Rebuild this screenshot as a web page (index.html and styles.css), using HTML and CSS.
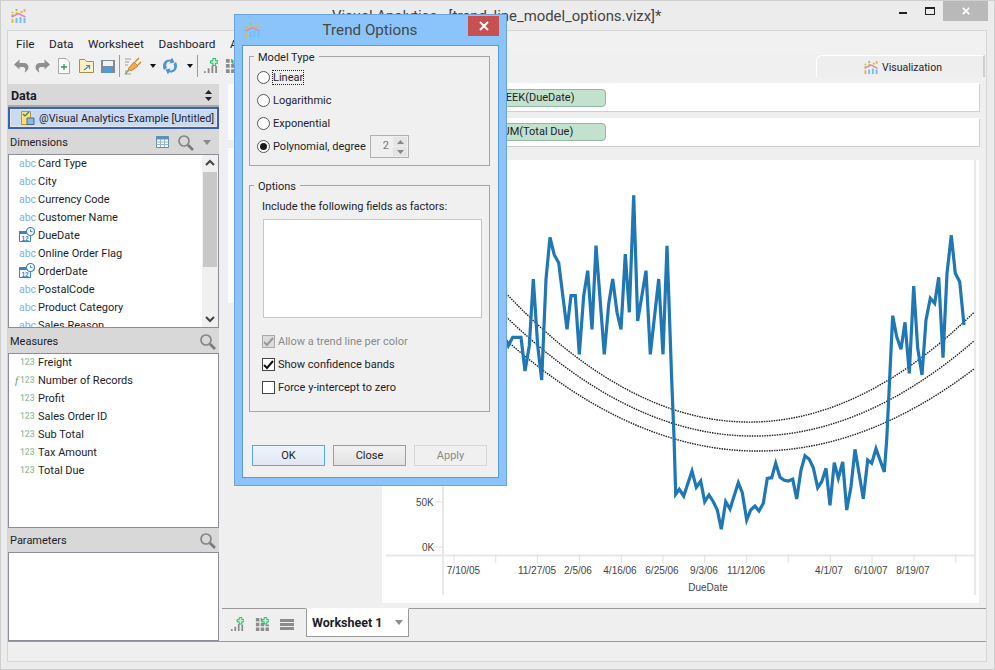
FILE: index.html
```html
<!DOCTYPE html>
<html lang="en">
<head>
<meta charset="utf-8">
<title>Visual Analytics</title>
<link rel="stylesheet" href="styles.css">
</head>
<body>
<svg class="defs" width="0" height="0" aria-hidden="true">
  <defs>
    <symbol id="i-app" viewBox="0 0 16 16">
      <path d="M1 6h2v2H1zM5 4h2v2H5zM13 1h2v3h-2zM10 3h2v2h-2z" fill="#f5b335"/>
      <path d="M5 1h2v2H5zM1 4h2v1H1z" fill="#8fc46f"/>
      <path d="M1 9 8 5.500l7 3.500" fill="none" stroke="#d58bb8" stroke-width="1.500"/>
      <path d="M1 11h2v4H1z" fill="#f5b335"/>
      <path d="M5 10h2v5H5zM9 9h2v6H9zM13 10h2v5h-2z" fill="#6fc0f2"/>
    </symbol>
    <symbol id="i-search" viewBox="0 0 17 17">
      <circle cx="7" cy="7" r="5" fill="none" stroke="#858585" stroke-width="1.700"/>
      <path d="m11 11 5 5" stroke="#7a7a7a" stroke-width="2.600"/>
    </symbol>
    <symbol id="i-date" viewBox="0 0 16 16">
      <path d="M.5 4.500h11v10H.5z" fill="#fff" stroke="#3f7fc8"/>
      <path d="M.5 4h11v3H.5z" fill="#3f7fc8"/>
      <text x="2.500" y="13.500" class="svg-date">12</text>
      <circle cx="11.500" cy="4.500" r="4" fill="#fff" stroke="#3f7fc8" stroke-width="1.200"/>
      <path d="M11.500 2.500v2.200h2" fill="none" stroke="#3f7fc8"/>
    </symbol>
    <symbol id="i-bars-plus" viewBox="0 0 16 16">
      <path d="M1 14h2v2H1zM5 11h2v5H5zM9 8h2v8H9zM13 8.500h2V16h-2z" fill="#8c8c8c"/>
      <path d="M10.500.5h3V3H16v2.500h-2.500V8h-3V5.500H8V3h2.500z" fill="#c4f5d4" stroke="#10b858"/>
    </symbol>
    <symbol id="i-grid-plus" viewBox="0 0 16 16">
      <path d="M1 1h4v4H1zM1 6.500h4v4H1zM1 12h4v4H1zM6.500 1h1.500v4H6.500zM6.500 6.500h4v4h-4zM6.500 12h4v4h-4zM12 12h4v4h-4zM12 8.500h4v2h-4z" fill="#8c8c8c"/>
      <path d="M10.500.5h3V3H16v2.500h-2.500V8h-3V5.500H8V3h2.500z" fill="#c4f5d4" stroke="#10b858"/>
    </symbol>
  </defs>
</svg>

<div class="app">
  <header class="titlebar">
    <svg class="app-icon"><use href="#i-app"/></svg>
    <span class="app-title">Visual Analytics - [trend_line_model_options.vizx]*</span>
    <div class="win-controls">
      <span class="win-min"></span>
      <span class="win-max"></span>
      <span class="win-close">
        <svg viewBox="0 0 11 11"><path d="m2 2 7 7M9 2 2 9" stroke="#fff" stroke-width="2"/></svg>
      </span>
    </div>
  </header>

  <div class="client">
    <nav class="menubar">
      <span>File</span><span>Data</span><span>Worksheet</span><span>Dashboard</span><span>Analysis</span>
    </nav>

    <div class="toolstrip">
      <div class="toolbar">
        <svg class="tool t-undo" viewBox="0 0 16 16"><path d="M6.500 1.500 1 6.500l5.500 5V9H10c1.500 0 2.300 1 2.300 2.500 0 1-.4 2-.9 3C14 13.500 15.500 11.500 15.500 9c0-2.500-2.500-4-5-4h-4z" fill="#8f8f8f"/></svg>
        <svg class="tool t-redo" viewBox="0 0 16 16"><path d="m9.500 1.500 5.500 5-5.500 5V9H6c-1.500 0-2.300 1-2.300 2.500 0 1 .4 2 .9 3C2 13.500.5 11.500.5 9c0-2.500 2.500-4 5-4h4z" fill="#8f8f8f"/></svg>
        <svg class="tool t-new" viewBox="0 0 12 16"><path d="M.5.500h7.500l3.500 3.500v11.500H.5z" fill="#fff" stroke="#a8a8a8"/><path d="M6 6v6M3 9h6" stroke="#2a9d4a" stroke-width="1.300"/></svg>
        <svg class="tool t-open" viewBox="0 0 15 14"><path d="M.5 13.500V.5h5l2 2h7v11z" fill="#fdf0c8" stroke="#b08a4a"/><path d="m5 11 5-4M7 6.500h3.500V10" fill="none" stroke="#3f8fd0" stroke-width="1.200"/></svg>
        <svg class="tool t-save" viewBox="0 0 14 14"><path d="M0 1h14v13H0z" fill="#7f8a94"/><path d="M2 2h10v5H2z" fill="#eef2f5"/><path d="M3 9h8v5H3z" fill="#4f9ad8"/></svg>
        <i class="sep s-a"></i>
        <svg class="tool t-plug" viewBox="0 0 18 18"><path d="M1 2h6M1 5h4M1 8h3M1 14h3M1 17h6" stroke="#9a9a9a"/><path d="m4 12 6-7 4 4-7 5z" fill="#f4a94e" stroke="#c98430"/><path d="m11 5 4-4M14 8l3-3" stroke="#c98430" stroke-width="1.400"/><path d="m1 17 4-4" stroke="#6fb05a" stroke-width="1.600"/></svg>
        <i class="caret c-a"></i>
        <svg class="tool t-sync" viewBox="0 0 16 18"><path d="M2 13C-1 7 3 1.500 9 2.500l1-2 2.500 5-5 1 1-2C5 4 3 7.500 5 11z" fill="#4f94cf"/><path d="M14 5c3 6-1 11.500-7 10.500l-1 2-2.500-5 5-1-1 2c4 .5 6-3 4-6.500z" fill="#4f94cf"/></svg>
        <i class="caret c-b"></i>
        <i class="sep s-b"></i>
        <svg class="tool t-bars"><use href="#i-bars-plus"/></svg>
        <svg class="tool t-grid"><use href="#i-grid-plus"/></svg>
      </div>
      <div class="viz-tab">
        <svg class="viz-icon"><use href="#i-app"/></svg>
        <span>Visualization</span>
      </div>
    </div>

    <div class="workspace">
      <aside class="sidebar">
        <div class="pane-head pane-data">
          <b>Data</b>
          <svg width="7" height="11" viewBox="0 0 7 11"><path d="M3.500 0 7 4H0zM3.500 11 0 7h7z" fill="#222"/></svg>
        </div>
        <div class="source">
          <svg class="source-icon" viewBox="0 0 14 14"><path d="M.5.500h9v13h-9z" fill="#fbe26a" stroke="#b89a30"/><path d="m2 3 2 2 4-4" fill="none" stroke="#3a6ea8" stroke-width="1.200"/><path d="M6 7h7v6.500H6z" fill="#8fb6dc" stroke="#3a6ea8"/></svg>
          <span>@Visual Analytics Example [Untitled]</span>
        </div>

        <div class="pane-head">
          <span>Dimensions</span>
          <div class="head-tools">
            <svg width="13" height="12" viewBox="0 0 13 12"><path d="M.5.500h12v11H.5z" fill="#fff" stroke="#5f8fb8"/><path d="M.5.500h12v3H.5z" fill="#5f8fb8"/><path d="M.5 6h12M.5 8.500h12M4.500 3v8M8.500 3v8" stroke="#9ab4cc"/></svg>
            <svg class="head-search"><use href="#i-search"/></svg>
            <i class="grey-caret"></i>
          </div>
        </div>
        <div class="list list-dim">
          <ul class="fields">
            <li><em class="abc">abc</em>Card Type</li>
            <li><em class="abc">abc</em>City</li>
            <li><em class="abc">abc</em>Currency Code</li>
            <li><em class="abc">abc</em>Customer Name</li>
            <li><svg class="date"><use href="#i-date"/></svg>DueDate</li>
            <li><em class="abc">abc</em>Online Order Flag</li>
            <li><svg class="date"><use href="#i-date"/></svg>OrderDate</li>
            <li><em class="abc">abc</em>PostalCode</li>
            <li><em class="abc">abc</em>Product Category</li>
            <li><em class="abc">abc</em>Sales Reason</li>
          </ul>
          <div class="scrollbar">
            <svg width="16" height="17" viewBox="0 0 16 17"><path d="m4 10 4-4 4 4" fill="none" stroke="#444" stroke-width="2"/></svg>
            <div class="track"><div class="thumb"></div></div>
            <svg width="16" height="17" viewBox="0 0 16 17"><path d="m4 7 4 4 4-4" fill="none" stroke="#444" stroke-width="2"/></svg>
          </div>
        </div>

        <div class="pane-head">
          <span>Measures</span>
          <svg class="head-search"><use href="#i-search"/></svg>
        </div>
        <div class="list list-mea">
          <ul class="fields">
            <li><em class="num">123</em>Freight</li>
            <li><em class="num"><u class="fx">f</u>123</em>Number of Records</li>
            <li><em class="num">123</em>Profit</li>
            <li><em class="num">123</em>Sales Order ID</li>
            <li><em class="num">123</em>Sub Total</li>
            <li><em class="num">123</em>Tax Amount</li>
            <li><em class="num">123</em>Total Due</li>
          </ul>
        </div>

        <div class="pane-head pane-par">
          <span>Parameters</span>
          <svg class="head-search"><use href="#i-search"/></svg>
        </div>
        <div class="list list-par"></div>
      </aside>

      <main class="stage">
        <div class="stage-body">
          <div class="marks">
            <div class="mark-card mark-a"></div>
            <div class="mark-card mark-b"></div>
          </div>
          <div class="viz">
            <div class="shelf"><span class="pill">WEEK(DueDate)</span></div>
            <div class="shelf"><span class="pill">SUM(Total Due)</span></div>
            <div class="chart">
              <svg class="plot" width="597" height="443" viewBox="382 160 597 443">
                <path class="axis" d="M443 160v435M386 555.500h589M975 160v435"/>
                <path class="tick" d="M436 502h7M436 547h7M454 555v8M495.700 555v8M537.300 555v8M579.300 555v8M621.300 555v8M663 555v8M704.700 555v8M746.700 555v8M788.300 555v8M830.300 555v8M872 555v8M914 555v8M955.700 555v8"/>
                <g class="ylab">
                  <text x="433.700" y="505.500">50K</text>
                  <text x="434.300" y="550.500">0K</text>
                </g>
                <g class="xlab">
                  <text x="463.500" y="574">7/10/05</text>
                  <text x="537" y="574">11/27/05</text>
                  <text x="578" y="574">2/5/06</text>
                  <text x="620" y="574">4/16/06</text>
                  <text x="662" y="574">6/25/06</text>
                  <text x="704" y="574">9/3/06</text>
                  <text x="746" y="574">11/12/06</text>
                  <text x="829" y="574">4/1/07</text>
                  <text x="871" y="574">6/10/07</text>
                  <text x="913" y="574">8/19/07</text>
                  <text x="708" y="590.500">DueDate</text>
                </g>
                <g class="band">
                  <path d="M506 293.300Q740 541 974 312.300"/>
                  <path d="M506 316.700Q740 542.600 974 341"/>
                  <path d="M506 340Q740 546.500 974 369"/>
                </g>
                <path class="series" d="M506 340 508.300 345.700 512.700 337.300H521L525 371 529.300 345.700 533.300 279 537.700 345.700 541.700 380 546 279 550 237.300 554.300 255 558.700 262.700 567 329.300 571 295.700H575.300L579.300 354.300 583.700 295.700 587.700 270.700 592 329.300 596 245.700 604.300 354.300 608.700 304 612.700 279 617 312.300 621 329.300 625.300 254 629.300 312.300 633.700 195.300 637.700 321 646 270.700 650.300 354.300 658.700 279 663 354.300 667 245.700 671.700 380 674 436.700 675.700 494.300 679.300 489.300 683.700 496 692 471 696.300 487.300 700.700 481 704.700 501.700 709 495 713.300 501.700 717.300 510 721.300 529.300 725.700 501.700 730 509 738.300 482.700 742.300 492.700 746.700 520 750.700 510 755 506 759 511 763.300 503.300 767.300 478.300 771.700 477.700 775.700 463.300 780 477.300 784.300 480.300 788.300 481 792.700 479.300 796.700 499 801 470 805 455.700 809.300 459.300 813.300 467.700 817.700 487.700 821.700 481.700 826 468.300 830 505.300 834.300 462.700 838.300 478.300 842.700 462 846.700 510 851 486.700 855 449.300 863.300 498.700 867.700 460 871.700 463.300 876 448.700 884.300 472 886.700 440 892.700 315.700 896.700 336.700 901 349.300 905 322.300 909.300 373.300 913.700 286 917.700 348.300 922 375 926 320 930.300 298.300 934.700 303.300 938.700 277.300 943 357.700 947 273.300 951.300 235.300 955.300 273.300 959.700 281.700 964 325"/>
              </svg>
            </div>
          </div>
        </div>
        <div class="sheetbar">
          <div class="sheet-tools">
            <svg class="sheet-icon"><use href="#i-bars-plus"/></svg>
            <svg class="sheet-icon"><use href="#i-grid-plus"/></svg>
            <span class="sheet-list"><i></i><i></i><i></i></span>
          </div>
          <div class="sheet-tab"><b>Worksheet 1</b><i class="grey-caret"></i></div>
        </div>
      </main>
    </div>
    <footer class="statusbar"></footer>
  </div>

  <section class="dialog">
    <header class="dlg-title">
      <svg class="dlg-icon"><use href="#i-app"/></svg>
      <span>Trend Options</span>
      <button class="dlg-close" type="button" aria-label="Close">
        <svg width="10" height="10" viewBox="0 0 10 10"><path d="m1 1 8 8M9 1 1 9" stroke="#fff" stroke-width="2"/></svg>
      </button>
    </header>
    <div class="dlg-body">
      <fieldset class="group group-model">
        <legend>Model Type</legend>
        <label class="opt"><i class="radio"></i><span class="focus">Linear</span></label>
        <label class="opt"><i class="radio"></i><span>Logarithmic</span></label>
        <label class="opt"><i class="radio"></i><span>Exponential</span></label>
        <label class="opt"><i class="radio radio-on"></i><span class="poly-label">Polynomial, degree</span>
          <span class="spinner"><span class="spin-val">2</span>
            <span class="spin-btns">
              <i><svg width="7" height="4" viewBox="0 0 7 4"><path d="M3.500 0 7 4H0z" fill="#888"/></svg></i>
              <i><svg width="7" height="4" viewBox="0 0 7 4"><path d="M0 0h7L3.500 4z" fill="#888"/></svg></i>
            </span>
          </span>
        </label>
      </fieldset>
      <fieldset class="group group-options">
        <legend>Options</legend>
        <p class="factor-label">Include the following fields as factors:</p>
        <div class="factors"></div>
        <label class="opt chk-row chk-off"><i class="check check-dis"><svg width="11" height="10" viewBox="0 0 11 10"><path d="m1 5 3 3 6-7" fill="none" stroke="#9a9a9a" stroke-width="2"/></svg></i><span>Allow a trend line per color</span></label>
        <label class="opt chk-row"><i class="check"><svg width="11" height="10" viewBox="0 0 11 10"><path d="m1 5 3 3 6-7" fill="none" stroke="#111" stroke-width="2"/></svg></i><span>Show confidence bands</span></label>
        <label class="opt chk-row"><i class="check"></i><span>Force y-intercept to zero</span></label>
      </fieldset>
      <div class="dlg-buttons">
        <button class="btn btn-ok" type="button">OK</button>
        <button class="btn" type="button">Close</button>
        <button class="btn btn-dis" type="button">Apply</button>
      </div>
    </div>
  </section>
</div>
</body>
</html>
```
FILE: styles.css
```css
* { box-sizing: border-box; }
html, body { margin: 0; padding: 0; }
body {
  width: 995px; height: 670px; overflow: hidden;
  font-family: Roboto, "Open Sans", sans-serif;
  font-size: 11px; color: #1c1c28;
  background: #ececec;
}
.defs { position: absolute; }
i, em, u { font-style: normal; text-decoration: none; }
ul { list-style: none; margin: 0; padding: 0; }
p { margin: 0; }

.app {
  position: relative; width: 995px; height: 670px;
  display: flex; flex-direction: column;
  background: #ececec;
  border: 1px solid #cfcfcf;
  padding: 0 7px 7px 6px;
}

/* title bar */
.titlebar { height: 29px; flex: none; display: flex; align-items: flex-start; position: relative; margin-left: -6px; margin-right: -7px; }
.app-icon { width: 17px; height: 16px; margin: 7px 0 0 9px; }
.app-title {
  position: absolute; left: 331px; top: 6px;
  font-size: 14.900px; color: #444; white-space: nowrap;
}
.win-controls { margin-left: auto; display: flex; align-items: flex-start; }
.win-min { width: 8px; height: 2px; background: #222; margin: 11px 0 0; }
.win-max { width: 10px; height: 8px; border: 1px solid #222; border-top-width: 2px; margin: 6px 0 0 18px; }
.win-close { width: 45px; height: 20px; background: #b9b9b9; margin-left: 8px; margin-right: 6px; display: flex; align-items: center; justify-content: center; }
.win-close svg { width: 10px; height: 10px; }

/* client */
.client {
  flex: 1; min-height: 0; display: flex; flex-direction: column;
  background: #efefef; border: 1px solid #d6d6d6;
}
.menubar { height: 23px; flex: none; display: flex; gap: 14.500px; padding: 6px 0 0 8px; font-size: 11.800px; background: #f1f1f1; }
.toolstrip { height: 30px; flex: none; display: flex; justify-content: space-between; background: #f0f0f0; }
.toolbar { display: flex; align-items: center; height: 23px; padding-left: 5px; }
.tool { flex: none; }
.t-undo, .t-redo { width: 16px; height: 16px; }
.t-redo { margin-left: 6px; }
.t-new { width: 12px; height: 16px; margin-left: 7px; }
.t-open { width: 15px; height: 14px; margin-left: 9px; }
.t-save { width: 14px; height: 14px; margin-left: 7px; }
.s-a { margin-left: 4px; }
.t-plug { width: 18px; height: 18px; margin-left: 4px; }
.c-a { margin-left: 8px; }
.t-sync { width: 16px; height: 18px; margin-left: 6px; }
.c-b { margin-left: 9px; }
.s-b { margin-left: 4px; }
.t-bars { width: 15px; height: 15px; margin-left: 5px; }
.t-grid { width: 15px; height: 15px; margin-left: 7px; }
.sep { width: 1px; height: 22px; background: #9a9a9a; flex: none; }
.caret { width: 0; height: 0; border: 3px solid transparent; border-top: 4px solid #111; border-bottom: 0; flex: none; }
.viz-tab {
  width: 169px; height: 22px; margin: 1px 1px 0 0;
  background: #eeeeee; border: 1px solid #fff; border-bottom: 0; border-radius: 6px 0 0 0;
  display: flex; align-items: center; padding: 1px 0 0 46px; gap: 3px; font-size: 10.500px;
  border-right: 2px solid #cfcfcf;
}
.viz-icon { width: 16px; height: 15px; flex: none; }

.workspace { flex: 1; min-height: 0; display: flex; }

/* sidebar */
.sidebar { width: 211px; flex: none; display: flex; flex-direction: column; }
.pane-head {
  height: 25px; flex: none; display: flex; align-items: center; justify-content: space-between;
  padding: 1px 2px 0; background: #d8d8d8;
}
.pane-data { height: 23px; padding: 1px 7px 0 3px; border-bottom: 2px solid #aaa; font-size: 12.500px; }
.pane-par { height: 24px; padding-top: 0; }
.source {
  height: 22px; flex: none; display: flex; align-items: center; gap: 4px;
  padding-left: 11px; background: #c9daf3; border: 2px solid #3a62b0; outline: 1px solid #e6e6e6; outline-offset: -3px;
  white-space: nowrap; overflow: hidden; font-size: 10.800px;
}
.source-icon { width: 14px; height: 14px; flex: none; }
.head-tools { display: flex; align-items: center; gap: 8px; padding-right: 6px; }
.head-search { width: 17px; height: 17px; margin-right: 1px; }
.grey-caret { width: 0; height: 0; border: 4px solid transparent; border-top: 5px solid #8c8c8c; border-bottom: 0; }

.list { background: #fff; border: 1px solid #8d8d99; display: flex; overflow: hidden; flex: none; }
.list-dim { height: 174px; }
.list-mea { height: 175px; }
.list-par { height: 89px; }
.fields { flex: 1; padding-left: 10px; white-space: nowrap; margin-top: -1px; }
.fields li { height: 18px; display: flex; align-items: center; }
.abc { width: 19px; color: #7fb0ea; font-size: 10.500px; flex: none; }
.num { width: 19px; color: #94c0a8; font-size: 8.500px; font-weight: 500; flex: none; padding-left: 1px; position: relative; }
.fx { position: absolute; left: -4px; top: -1px; font-style: italic; font-family: "Liberation Serif", serif; font-size: 11px; color: #5c9c6c; }
.date { width: 16px; height: 16px; margin-right: 3px; flex: none; }
.svg-date { font: 700 6.500px "Liberation Sans", sans-serif; fill: #3f7fc8; }
.scrollbar { width: 16px; flex: none; background: #f0f0f0; display: flex; flex-direction: column; }
.track { flex: 1; }
.thumb { height: 95px; background: #c8c8c8; margin: 0 1px; }

/* stage */
.stage { flex: 1; min-width: 0; display: flex; flex-direction: column; }
.stage-body { flex: 1; min-height: 0; display: flex; }
.marks { width: 163px; flex: none; padding: 0 10px 0 9px; }
.mark-card { background: #fbfbfb; margin-bottom: 8px; }
.mark-a { height: 56px; }
.mark-b { height: 155px; }
.viz { flex: 1; min-width: 0; padding: 0 7px 0 0; margin-top: -1px; display: flex; flex-direction: column; }
.shelf {
  height: 28px; flex: none; background: #fff; margin-bottom: 7px; padding: 5px 0 0 48px;
  box-shadow: 1px 1px 0 #cfcfcf;
}
.shelf:first-child { padding-top: 6px; }
.pill {
  display: block; width: 176px; height: 18px; padding-left: 65px; line-height: 16px;
  background: #c2e2cd; border: 1px solid #93b8a3; border-radius: 4px;
}
.chart { width: 597px; height: 443px; background: #fff; margin-top: 7px; flex: none; }
.plot { display: block; }
.axis { stroke: #e8e8e8; stroke-width: 2; fill: none; }
.tick { stroke: #e0e0e0; stroke-width: 1; fill: none; }
.ylab text { font: 10px "Liberation Sans", sans-serif; fill: #444; text-anchor: end; }
.xlab text { font: 10px "Liberation Sans", sans-serif; fill: #444; text-anchor: middle; }
.band path { fill: none; stroke: #222; stroke-width: 1.400; stroke-dasharray: 1.500 1; }
.series { fill: none; stroke: #1f77b4; stroke-width: 3.200; stroke-linejoin: miter; stroke-miterlimit: 4; }

.sheetbar { height: 33px; flex: none; display: flex; align-items: flex-start; margin-left: 3px; margin-top: 5px; border-top: 1px solid #9a9a9a; }
.sheet-tools { display: flex; align-items: center; gap: 11px; width: 84px; padding: 8px 0 0 8px; flex: none; }
.sheet-icon { width: 14px; height: 14px; flex: none; }
.sheet-list { display: flex; flex-direction: column; gap: 1px; flex: none; }
.sheet-list i { display: block; width: 14px; height: 3px; background: #8c8c8c; }
.sheet-tab {
  width: 103px; height: 29px; margin-top: -1px; background: #fff; border: 1px solid #9a9a9a; border-top-color: #fff;
  display: flex; align-items: center; justify-content: space-between; padding: 0 5px; font-size: 12.500px;
}
.statusbar { height: 20px; flex: none; background: #efefef; border-top: 1px solid #9a9a9a; }

/* dialog */
.dialog {
  position: absolute; left: 233px; top: 13px; width: 273px; height: 472px;
  background: #8ac4fa; border: 1px solid #6aa4d8; padding: 0 7px 7px 7px;
  display: flex; flex-direction: column;
}
.dlg-title { height: 30px; flex: none; position: relative; display: flex; justify-content: center; align-items: center; }
.dlg-title span { font-size: 15.200px; color: #474747; margin-left: -1px; }
.dlg-icon { position: absolute; left: 2px; top: 7px; width: 17px; height: 16px; }
.dlg-close { position: absolute; right: 0; top: 1px; width: 31px; height: 20px; border: 0; padding: 0; background: #c75050; display: flex; align-items: center; justify-content: center; }
.dlg-body { flex: 1; background: #f0f0f0; border: 1px solid #5b9ad6; padding: 1px 8px 0 6px; display: flex; flex-direction: column; }
.group { margin: 0; padding: 0; border: 1px solid #a5a5a5; position: relative; }
.group legend { padding: 4px 4px 0; line-height: 14px; }
.group-model legend { margin-left: -3px; }
.group-options legend { margin-left: -8px; }
.group-model { height: 119px; padding: 1px 0 0 7px; flex: none; }
.group-options { height: 236px; margin-top: 10px; flex: none; padding: 0 7px 0 12px; }
.opt { display: flex; align-items: center; height: 23px; gap: 3px; }
.radio { width: 13px; height: 13px; border-radius: 50%; border: 1px solid #555; background: #fff; flex: none; position: relative; }
.radio-on::after { content: ""; position: absolute; inset: 2px; background: #1a1a1a; border-radius: 50%; }
.focus { outline: 1px dotted #222; line-height: 13px; }
.poly-label { width: 92px; white-space: nowrap; }
.spinner { display: flex; width: 39px; height: 23px; border: 1px solid #b0b0b0; margin-left: 2px; background: #efefef; flex: none; }
.spin-val { flex: 1; text-align: right; padding: 3px 3px 0 0; color: #777; }
.spin-btns { width: 16px; display: flex; flex-direction: column; gap: 1px; padding: 1px; }
.spin-btns i { flex: 1; background: #e4e4e4; display: flex; align-items: center; justify-content: center; }
.factor-label { height: 22px; padding-top: 3px; margin-top: 3px; }
.factors { width: 219px; height: 99px; background: #fff; border: 1px solid #c8c8c8; margin: 0 0 12px 1px; }
.check { width: 13px; height: 13px; border: 1px solid #444; background: #fff; flex: none; display: flex; align-items: center; justify-content: center; }
.check-dis { background: #dcdcdc; border-color: #aaa; }
.chk-off { color: #8a8a8a; }
.dlg-buttons { display: flex; gap: 8px; margin: 33px 0 0 3px; }
.btn {
  width: 73px; height: 21px; padding: 0; font: 11px Roboto, sans-serif; color: #1c1c28;
  background: linear-gradient(#f2f2f2, #e2e2e2); border: 1px solid #9c9c9c;
}
.btn-ok { background: linear-gradient(#eef4fb, #dfe8f2); border-color: #5aa6ee; }
.btn-dis { background: #f0f0f0; border-color: #d6d6d6; color: #8a8a8a; }
```
